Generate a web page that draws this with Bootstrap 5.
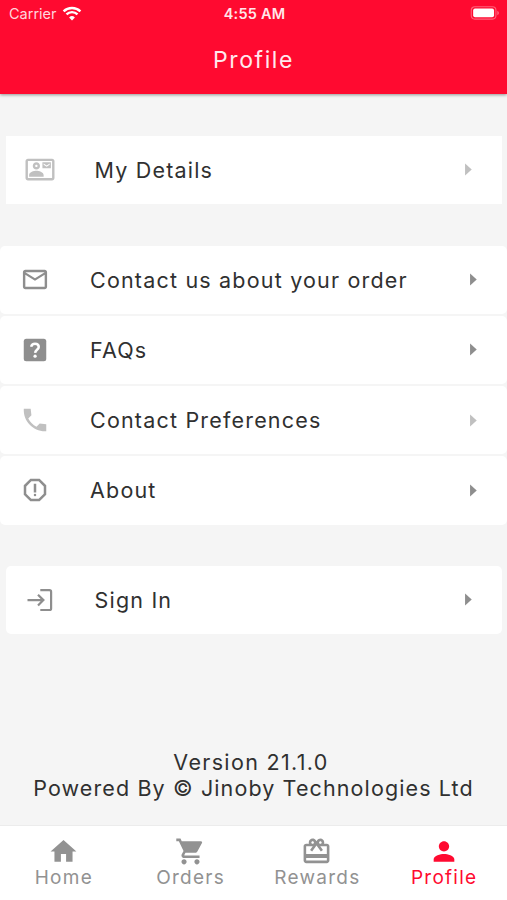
<!DOCTYPE html>
<html lang="en">
<head>
<meta charset="utf-8">
<meta name="viewport" content="width=device-width, initial-scale=1">
<title>Profile</title>
<link href="https://cdn.jsdelivr.net/npm/bootstrap@5.3.0/dist/css/bootstrap.min.css" rel="stylesheet">
<style>
body{font-family:Inter,"Liberation Sans",sans-serif;background:#f5f5f5;color:#303030;height:900px;overflow:hidden}
svg{display:block;flex:none;fill:currentColor}
.top-area{height:94px;background:#ff0a30;box-shadow:0 1px 3px rgba(0,0,0,.4)}
.status-line{height:28px;padding:0 7px 0 9px}
.carrier{font-size:14.5px;letter-spacing:0;color:#ffd5dc}
.wifi{color:#fff;margin:-2px 0 0 5px}
.battery{margin-top:-2px}
.clock{font-size:14.5px;font-weight:600;letter-spacing:.2px;color:#ffe6ea}
.page-title{font-size:23px;line-height:64px;letter-spacing:1.6px;color:#ffe9ed}
.item{height:68.4px;background:#fff;border-radius:5px;padding:0 20px}
.item svg{color:#8e8e8e}
.item.faded svg{color:#c0c0c0}
.item .text-label{font-size:21.5px;letter-spacing:1.19px;line-height:28px}
.icon-slot{width:70px}
.inset-item{margin:0 5px 0 6px;padding-left:19px}
.inset-item .icon-slot{width:69.5px}
.square-item{border-radius:0;margin-top:42px;padding-bottom:1px}
.menu-list{gap:1.8px;margin:41.2px 0}
.credits{font-size:21.5px;line-height:26px;letter-spacing:1.11px;margin-top:114.8px}
.version-line{letter-spacing:1.33px;padding-right:5px}
.bottom-bar{height:75px;background:#fff;border-top:1px solid #ececec;color:#929292}
.tab-item{font-size:19px;line-height:24px;letter-spacing:1.25px;padding-top:9.5px}
.tab-item div{padding-left:1px;margin-top:-.5px}
.tab-item.current{color:#ff0a30}
</style>
</head>
<body class="d-flex flex-column">
<header class="top-area flex-shrink-0">
  <div class="status-line row g-0 align-items-center">
    <div class="col d-flex align-items-center carrier">Carrier
      <svg class="wifi" width="20" height="15" viewBox="0 0 20 15"><path d="M10 14.5 7.1 11.4a4.1 4.1 0 0 1 5.8 0z"/><path d="M4.5 8.4a7.8 7.8 0 0 1 11 0M1.6 5.4a12 12 0 0 1 16.8 0" fill="none" stroke="currentColor" stroke-width="2.4"/></svg>
    </div>
    <div class="col-auto clock">4:55 AM</div>
    <div class="col d-flex justify-content-end">
      <svg class="battery" width="30" height="14" viewBox="0 0 31 15"><rect x=".8" y=".8" width="26.4" height="13.2" rx="3.8" fill="none" stroke="#ff6079" stroke-width="1.2"/><rect x="2.8" y="2.8" width="22.4" height="9.2" rx="2" fill="#fff"/><path d="M28.6 5v5q2-1 2-2.500T28.600 5z" fill="#ff6079"/></svg>
    </div>
  </div>
  <h1 class="page-title text-center fw-normal m-0">Profile</h1>
</header>
<main class="flex-grow-1">
  <div class="item inset-item square-item faded d-flex align-items-center">
    <div class="icon-slot"><svg width="30" height="29" viewBox="0 0 24 24"><path d="M22 3H2C.9 3 0 3.900 0 5v14c0 1.100.9 2 2 2h20c1.100 0 1.990-.9 1.990-2L24 5c0-1.100-.9-2-2-2zm0 16H2V5h20v14zM21 6h-7v5h7V6zm-1 2-2.500 1.750L15 8V7l2.500 1.750L20 7v1zM9 12c1.650 0 3-1.350 3-3s-1.350-3-3-3-3 1.350-3 3 1.350 3 3 3zm0-4c.55 0 1 .45 1 1s-.45 1-1 1-1-.45-1-1 .45-1 1-1zm6 8.590c0-2.500-3.970-3.580-6-3.580s-6 1.080-6 3.580V18h12v-1.410z"/></svg></div>
    <div class="text-label flex-grow-1">My Details</div>
    <svg width="29" height="29" viewBox="0 0 24 24"><path d="M10 17l5.500-5-5.500-5z"/></svg>
  </div>
  <div class="menu-list d-flex flex-column">
    <div class="item d-flex align-items-center">
      <div class="icon-slot"><svg width="30" height="29" viewBox="0 0 24 24"><path d="M22 6c0-1.100-.9-2-2-2H4c-1.100 0-2 .9-2 2v12c0 1.100.9 2 2 2h16c1.100 0 2-.9 2-2V6zm-2 0-8 5-8-5h16zm0 12H4V8l8 5 8-5v10z"/></svg></div>
      <div class="text-label flex-grow-1">Contact us about your order</div>
      <svg width="29" height="29" viewBox="0 0 24 24"><path d="M10 17l5.500-5-5.500-5z"/></svg>
    </div>
    <div class="item d-flex align-items-center">
      <div class="icon-slot"><svg width="30" height="30" viewBox="0 0 24 24"><rect x="3" y="3" width="18" height="18" rx="2"/><path d="M8.900 9.400C9.300 7.700 10.500 7 12 7c1.800 0 3 1.100 3 2.600 0 2.200-2.800 2.300-2.900 4.700" fill="none" stroke="#fff" stroke-width="2"/><circle cx="12.050" cy="16.900" r="1.300" fill="#fff"/></svg></div>
      <div class="text-label flex-grow-1">FAQs</div>
      <svg width="29" height="29" viewBox="0 0 24 24"><path d="M10 17l5.500-5-5.500-5z"/></svg>
    </div>
    <div class="item faded d-flex align-items-center">
      <div class="icon-slot"><svg width="30" height="30" viewBox="0 0 24 24"><path d="M21 15.460l-5.270-.61-2.520 2.520a15.050 15.050 0 0 1-6.590-6.590l2.530-2.530L8.540 3H3.030C2.450 13.180 10.820 21.550 21 20.970z"/></svg></div>
      <div class="text-label flex-grow-1">Contact Preferences</div>
      <svg width="29" height="29" viewBox="0 0 24 24"><path d="M10 17l5.500-5-5.500-5z"/></svg>
    </div>
    <div class="item d-flex align-items-center">
      <div class="icon-slot"><svg width="30" height="30" viewBox="0 0 24 24"><path d="M15.730 3H8.270L3 8.270v7.460L8.270 21h7.460L21 15.730V8.270L15.730 3zM19 14.900 14.900 19H9.100L5 14.900V9.100L9.100 5h5.800L19 9.100v5.800z"/><circle cx="12" cy="16" r="1"/><path d="M11 7h2v7h-2z"/></svg></div>
      <div class="text-label flex-grow-1">About</div>
      <svg width="29" height="29" viewBox="0 0 24 24"><path d="M10 17l5.500-5-5.500-5z"/></svg>
    </div>
  </div>
  <div class="item inset-item d-flex align-items-center">
    <div class="icon-slot"><svg width="30" height="30" viewBox="0 0 30 30"><path d="M15.300 5.200h9.200q1.600 0 1.600 1.600v16.600q0 1.600-1.600 1.600h-9.200M2.500 15.100h16M13 9.700l5.400 5.400-5.400 5.400" fill="none" stroke="currentColor" stroke-width="2.200"/></svg></div>
    <div class="text-label flex-grow-1">Sign In</div>
    <svg width="29" height="29" viewBox="0 0 24 24"><path d="M10 17l5.500-5-5.500-5z"/></svg>
  </div>
  <div class="credits text-center"><div class="version-line">Version 21.1.0</div><div>Powered By © Jinoby Technologies Ltd</div></div>
</main>
<nav class="bottom-bar row g-0 flex-shrink-0">
  <div class="tab-item col d-flex flex-column align-items-center">
    <svg width="31" height="31" viewBox="0 0 24 24"><path d="M10 20v-6h4v6h5v-8h3L12 3 2 12h3v8z"/></svg><div>Home</div>
  </div>
  <div class="tab-item col d-flex flex-column align-items-center">
    <svg width="31" height="31" viewBox="0 0 24 24"><path d="M7 18c-1.100 0-1.990.9-1.990 2S5.900 22 7 22s2-.9 2-2-.9-2-2-2zM1 2v2h2l3.600 7.590-1.350 2.450c-.16.28-.25.61-.25.96 0 1.100.9 2 2 2h12v-2H7.420c-.14 0-.25-.11-.25-.25l.03-.12.900-1.630h7.450c.75 0 1.410-.41 1.750-1.030l3.580-6.490c.08-.14.12-.31.12-.48 0-.55-.45-1-1-1H5.210l-.94-2H1zm16 16c-1.100 0-1.990.9-1.990 2s.89 2 1.990 2 2-.9 2-2-.9-2-2-2z"/></svg><div>Orders</div>
  </div>
  <div class="tab-item col d-flex flex-column align-items-center">
    <svg width="31" height="31" viewBox="0 0 24 24"><path d="M20 6h-2.180c.11-.31.18-.65.18-1 0-1.660-1.340-3-3-3-1.050 0-1.960.54-2.500 1.350l-.5.670-.5-.68C10.960 2.540 10.050 2 9 2 7.340 2 6 3.340 6 5c0 .35.07.69.18 1H4c-1.110 0-1.990.89-1.990 2L2 19c0 1.110.89 2 2 2h16c1.110 0 2-.89 2-2V8c0-1.110-.89-2-2-2zm-5-2c.55 0 1 .45 1 1s-.45 1-1 1-1-.45-1-1 .45-1 1-1zM9 4c.55 0 1 .45 1 1s-.45 1-1 1-1-.45-1-1 .45-1 1-1zm11 15H4v-2h16v2zm0-5H4V8h5.080L7 10.830 8.620 12 11 8.760l1-1.360 1 1.360L15.380 12 17 10.830 14.920 8H20v6z"/></svg><div>Rewards</div>
  </div>
  <div class="tab-item current col d-flex flex-column align-items-center">
    <svg width="32" height="31" viewBox="0 0 24 24"><path d="M12 12c2.210 0 4-1.790 4-4s-1.790-4-4-4-4 1.790-4 4 1.790 4 4 4zm0 2c-2.670 0-8 1.340-8 4v2h16v-2c0-2.660-5.330-4-8-4z"/></svg><div>Profile</div>
  </div>
</nav>
<script src="https://cdn.jsdelivr.net/npm/bootstrap@5.3.0/dist/js/bootstrap.bundle.min.js"></script>
</body>
</html>
